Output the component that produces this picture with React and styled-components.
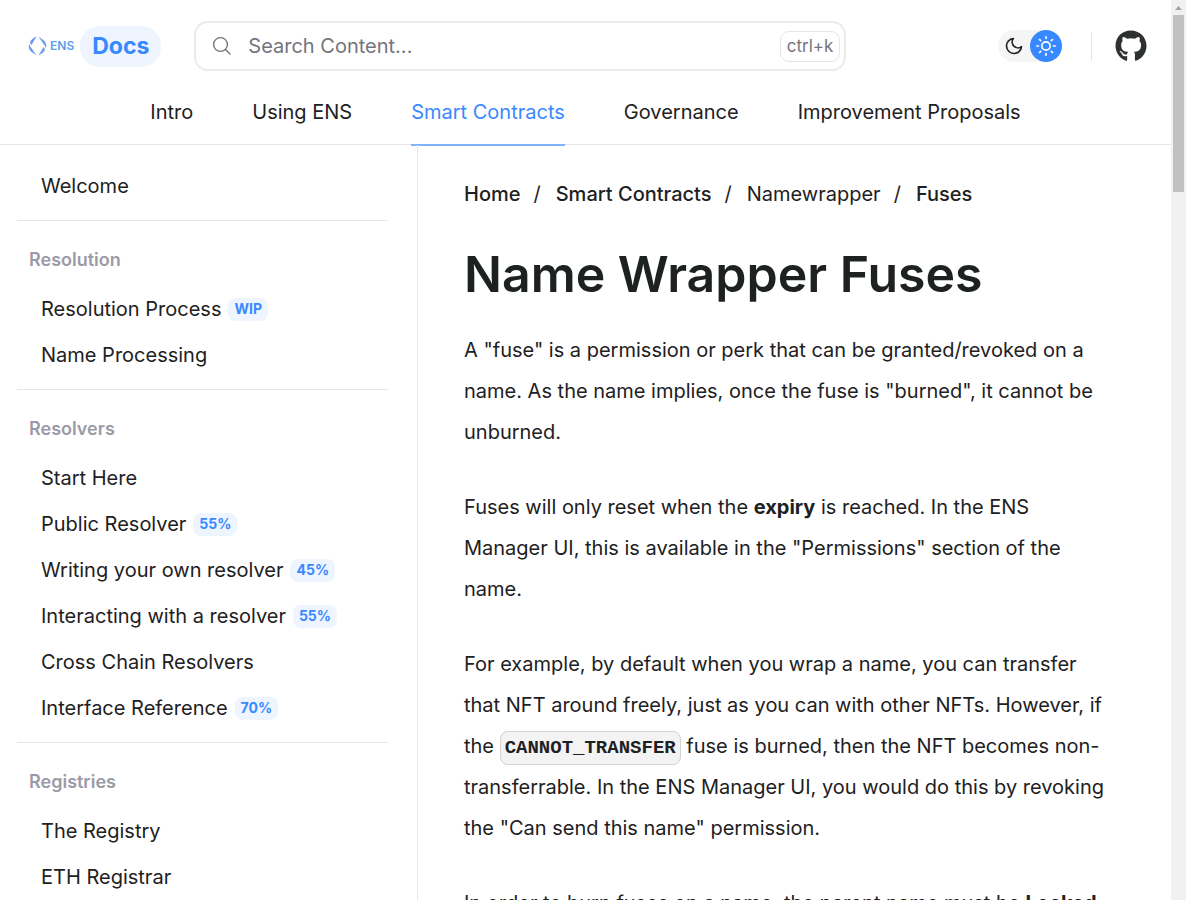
import React from "react";
import styled, { createGlobalStyle } from "styled-components";
import { FaGithub } from "react-icons/fa";
import { FiSun, FiMoon } from "react-icons/fi";

const GlobalStyle = createGlobalStyle`
  *, *::before, *::after { box-sizing: border-box; }
  body {
    margin: 0;
    background: #fff;
    color: #1e2122;
    font-family: Inter, "Liberation Sans", sans-serif;
    font-size: 20px;
    line-height: 30px;
  }
  a { color: inherit; text-decoration: none; }
  ul, ol { list-style: none; margin: 0; padding: 0; }
`;

const Viewport = styled.div`
  display: flex;
  height: 100vh;
  overflow: hidden;
`;

const Page = styled.div`
  flex: 1;
  min-width: 0;
  display: flex;
  flex-direction: column;
  overflow: hidden;
`;

const ScrollRail = styled.div`
  flex: 0 0 15px;
  display: flex;
  flex-direction: column;
  align-items: center;
  background: #f1f1f1;
`;

const ScrollArrow = styled.svg`
  flex: none;
  width: 15px;
  height: 15px;
`;

const ScrollThumb = styled.div`
  width: 11px;
  height: 177px;
  background: #c1c1c1;
`;

const Header = styled.header`
  flex: none;
  border-bottom: 1px solid #e6e6e8;
`;

const TopBar = styled.div`
  display: flex;
  align-items: center;
  padding: 21px 24px 8px 28px;
`;

const Brand = styled.a`
  display: flex;
  align-items: center;
  gap: 6px;
`;

const Mark = styled.svg`
  display: block;
  width: 19px;
  height: 20px;
`;

const Wordmark = styled.span`
  display: flex;
  align-items: center;
  gap: 3px;
  color: #5ba0ec;
  font-size: 12px;
  font-weight: 600;
  line-height: 20px;
`;

const DocsPill = styled.span`
  padding: 0 12px;
  border-radius: 20px;
  background: #eef5ff;
  color: #3889ff;
  font-size: 23px;
  font-weight: 700;
  line-height: 41px;
`;

const SearchBox = styled.label`
  display: flex;
  align-items: center;
  flex: 0 1 652px;
  height: 50px;
  margin-left: 33px;
  padding: 0 4px 0 16px;
  gap: 16px;
  border: 2px solid #ebebeb;
  border-radius: 14px;
  color: #74747c;
`;

const SearchInput = styled.input`
  flex: 1;
  min-width: 0;
  padding: 0;
  border: 0;
  outline: 0;
  background: transparent;
  font: inherit;
  color: inherit;
  &::placeholder { color: #74747c; opacity: 1; }
`;

const Kbd = styled.kbd`
  padding: 0 6px;
  border: 1px solid #e6e6e8;
  border-radius: 9px;
  font-family: inherit;
  font-size: 17px;
  line-height: 29px;
`;

const Tools = styled.div`
  display: flex;
  align-items: center;
  margin-left: auto;
`;

const ThemeSwitch = styled.div`
  display: flex;
  border-radius: 16px;
  background: #f5f5f5;
`;

const ThemeButton = styled.button`
  display: grid;
  place-items: center;
  width: 32px;
  height: 32px;
  padding: 0;
  border: 0;
  border-radius: 16px;
  background: ${(p) => (p.$on ? "#3889ff" : "transparent")};
  color: ${(p) => (p.$on ? "#fff" : "#1e2122")};
`;

const Separator = styled.span`
  width: 1px;
  height: 29px;
  margin: 0 23px 0 29px;
  background: #e6e6e8;
`;

const GithubLink = styled.a`
  display: block;
  color: #2d3132;
  svg { display: block; }
`;

const Tabs = styled.nav`
  display: flex;
  justify-content: center;
  gap: 59px;
`;

const Tab = styled.a`
  padding: 18px 0 17px;
  margin-bottom: -2px;
  border-bottom: 2px solid ${(p) => (p.$active ? "#7fb2ff" : "transparent")};
  color: ${(p) => (p.$active ? "#3889ff" : "inherit")};
`;

const Columns = styled.div`
  flex: 1;
  min-height: 0;
  display: flex;
`;

const Sidebar = styled.nav`
  flex: 0 0 418px;
  padding: 18px 29px 0 17px;
  border-right: 1px solid #e6e6e8;
  overflow: hidden;
`;

const Section = styled.section`
  padding-bottom: 11px;
  & + & { border-top: 1px solid #e6e6e8; padding-top: 24px; }
`;

const SectionTitle = styled.h2`
  margin: 0 0 11px;
  padding-left: 12px;
  color: #9b9ba7;
  font-size: 18px;
  font-weight: 600;
  line-height: 30px;
`;

const SideLink = styled.a`
  display: flex;
  align-items: center;
  gap: 7px;
  height: 46px;
  padding-left: 24px;
`;

const Tag = styled.span`
  padding: 0 6px 2px;
  border-radius: 8px;
  background: #eef5ff;
  color: #3889ff;
  font-size: 14px;
  font-weight: 700;
  line-height: 21px;
`;

const Article = styled.main`
  flex: 1;
  min-width: 0;
  padding: 34px 58px 0 46px;
  overflow: hidden;
`;

const Crumbs = styled.ol`
  display: flex;
`;

const Crumb = styled.li`
  font-weight: ${(p) => (p.$plain ? 400 : 500)};
  &:not(:first-child)::before {
    content: "/";
    margin: 0 15px 0 13px;
    font-weight: 400;
  }
`;

const Title = styled.h1`
  margin: 33px 0 24px;
  font-size: 50px;
  font-weight: 600;
  line-height: 64px;
`;

const Paragraph = styled.p`
  margin: 0 0 34px;
  line-height: 41px;
`;

const Code = styled.code`
  padding: 5px 4px;
  border: 1px solid #d2d2d2;
  border-radius: 8px;
  background: #f3f3f3;
  font-family: "Liberation Mono", monospace;
  font-size: 19px;
  font-weight: 700;
  line-height: 34px;
`;

const tabs = ["Intro", "Using ENS", "Smart Contracts", "Governance", "Improvement Proposals"];

const sections = [
  { links: [["Welcome"]] },
  { title: "Resolution", links: [["Resolution Process", "WIP"], ["Name Processing"]] },
  {
    title: "Resolvers",
    links: [
      ["Start Here"],
      ["Public Resolver", "55%"],
      ["Writing your own resolver", "45%"],
      ["Interacting with a resolver", "55%"],
      ["Cross Chain Resolvers"],
      ["Interface Reference", "70%"],
    ],
  },
  { title: "Registries", links: [["The Registry"], ["ETH Registrar"]] },
];

function EnsMark() {
  return (
    <Mark viewBox="0 0 19 20" aria-hidden="true">
      <defs>
        <linearGradient id="ens" x1="0" y1="0" x2="1" y2="1">
          <stop offset="0" stopColor="#7a8df5" />
          <stop offset="1" stopColor="#62a8ee" />
        </linearGradient>
      </defs>
      <path
        fill="url(#ens)"
        d="M8.500 .5 3.500 9C2 7.500 1.800 6 2.700 4.700 4 3 6.500 1.500 8.500 .5ZM1.200 7.500c.3 2 1.300 3.400 2.600 5L8.500 19.500 3 15.600C.6 13.500.3 10 1.200 7.500ZM10.500 19.500l5-8.500c1.500 1.500 1.700 3 .8 4.300-1.300 1.700-3.800 3.200-5.800 4.200ZM17.800 12.500c-.3-2-1.300-3.400-2.600-5L10.500 .5 16 4.400c2.400 2.100 2.700 5.600 1.800 8.100Z"
      />
    </Mark>
  );
}

function SearchIcon() {
  return (
    <svg width="20" height="20" viewBox="0 0 20 20" fill="none" stroke="currentColor" strokeWidth="1.4" strokeLinecap="round" aria-hidden="true">
      <circle cx="8.500" cy="8.500" r="6.900" />
      <path d="M13.500 13.500 18 18" />
    </svg>
  );
}

export default function App() {
  return (
    <Viewport>
      <GlobalStyle />
      <Page>
        <Header>
          <TopBar>
            <Brand href="#">
              <Wordmark><EnsMark />ENS</Wordmark>
              <DocsPill>Docs</DocsPill>
            </Brand>
            <SearchBox>
              <SearchIcon />
              <SearchInput type="text" placeholder="Search Content..." aria-label="Search Content" />
              <Kbd>ctrl+k</Kbd>
            </SearchBox>
            <Tools>
              <ThemeSwitch>
                <ThemeButton type="button" aria-label="Dark theme"><FiMoon size={20} /></ThemeButton>
                <ThemeButton type="button" aria-label="Light theme" $on><FiSun size={20} /></ThemeButton>
              </ThemeSwitch>
              <Separator />
              <GithubLink href="#" aria-label="GitHub"><FaGithub size={32} /></GithubLink>
            </Tools>
          </TopBar>
          <Tabs aria-label="Main">
            {tabs.map((t) => (
              <Tab key={t} href="#" $active={t === "Smart Contracts"}>{t}</Tab>
            ))}
          </Tabs>
        </Header>
        <Columns>
          <Sidebar aria-label="Sections">
            {sections.map((s, i) => (
              <Section key={i}>
                {s.title && <SectionTitle>{s.title}</SectionTitle>}
                <ul>
                  {s.links.map(([label, tag]) => (
                    <li key={label}>
                      <SideLink href="#">{label}{tag && <Tag>{tag}</Tag>}</SideLink>
                    </li>
                  ))}
                </ul>
              </Section>
            ))}
          </Sidebar>
          <Article>
            <Crumbs>
              <Crumb><a href="#">Home</a></Crumb>
              <Crumb><a href="#">Smart Contracts</a></Crumb>
              <Crumb $plain>Namewrapper</Crumb>
              <Crumb><a href="#">Fuses</a></Crumb>
            </Crumbs>
            <Title>Name Wrapper Fuses</Title>
            <Paragraph>
              A "fuse" is a permission or perk that can be granted/revoked on a name. As the name
              implies, once the fuse is "burned", it cannot be unburned.
            </Paragraph>
            <Paragraph>
              Fuses will only reset when the <b>expiry</b> is reached. In the ENS Manager UI, this
              is available in the "Permissions" section of the name.
            </Paragraph>
            <Paragraph>
              For example, by default when you wrap a name, you can transfer that NFT around
              freely, just as you can with other NFTs. However, if the{" "}
              <Code>CANNOT_TRANSFER</Code> fuse is burned, then the NFT becomes non-transferrable.
              In the ENS Manager UI, you would do this by revoking the "Can send this name"
              permission.
            </Paragraph>
            <Paragraph>
              In order to burn fuses on a name, the parent name must be <b>Locked</b>
            </Paragraph>
          </Article>
        </Columns>
      </Page>
      <ScrollRail aria-hidden="true">
        <ScrollArrow viewBox="0 0 15 15"><path d="M4 10l3.500-4L11 10Z" fill="#a3a3a3" /></ScrollArrow>
        <ScrollThumb />
      </ScrollRail>
    </Viewport>
  );
}
